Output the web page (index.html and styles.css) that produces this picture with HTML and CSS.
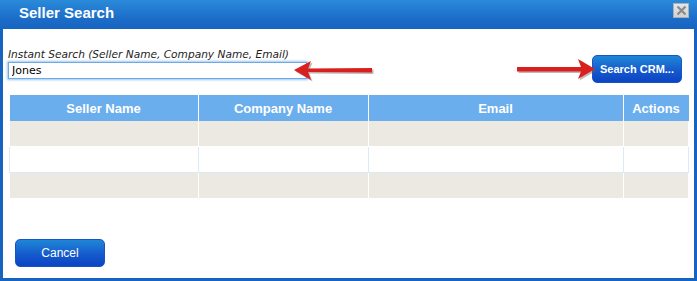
FILE: index.html
```html
<!DOCTYPE html>
<html lang="en">
<head>
    <meta charset="UTF-8">
    <meta name="viewport" content="width=device-width, initial-scale=1.0">
    <title>Seller Search</title>
    <link rel="stylesheet" href="styles.css">
</head>
<body>
    <div class="dialog">
        <div class="titlebar">
            <span class="title">Seller Search</span>
            <button class="close" title="Close">
                <svg width="11" height="11" viewBox="0 0 11 11">
                    <path d="M1.5 1.5 L9.5 9.5 M9.5 1.5 L1.5 9.5" stroke="#8a8a8a" stroke-width="2.2"/>
                </svg>
            </button>
        </div>
        <div class="content">
            <div class="search-row">
                <div class="search-field">
                    <label for="instantSearch">Instant Search (Seller Name, Company Name, Email)</label>
                    <input type="text" id="instantSearch" value="Jones">
                </div>
                <button class="btn btn-search">Search CRM...</button>
            </div>

            <table class="results">
                <thead>
                    <tr>
                        <th class="col-seller">Seller Name</th>
                        <th class="col-company">Company Name</th>
                        <th class="col-email">Email</th>
                        <th class="col-actions">Actions</th>
                    </tr>
                </thead>
                <tbody>
                    <tr><td></td><td></td><td></td><td></td></tr>
                    <tr><td></td><td></td><td></td><td></td></tr>
                    <tr><td></td><td></td><td></td><td></td></tr>
                </tbody>
            </table>

            <button class="btn btn-cancel">Cancel</button>
        </div>

        <!-- annotation arrows -->
        <svg class="arrow arrow-left" width="86" height="26" viewBox="0 0 86 26">
            <g transform="translate(1.5,1.5)" fill="#7a5a5a" opacity="0.45">
                <path d="M2 11 L19 2 L16 9.5 L80 9 L80 13.5 L16 13 L19 21 Z"/>
            </g>
            <path d="M2 11 L19 2 L16 9.5 L80 9 L80 13.5 L16 13 L19 21 Z" fill="#d9201f"/>
        </svg>
        <svg class="arrow arrow-right" width="86" height="26" viewBox="0 0 86 26">
            <g transform="translate(1.5,1.5)" fill="#7a5a5a" opacity="0.45">
                <path d="M80 11 L63 1 L66 9 L2 9 L2 13.5 L66 13.5 L63 21 Z"/>
            </g>
            <path d="M80 11 L63 1 L66 9 L2 9 L2 13.5 L66 13.5 L63 21 Z" fill="#d9201f"/>
        </svg>
    </div>
</body>
</html>
```

FILE: styles.css
```css
body {
    margin: 0;
    padding: 0;
    background-color: #fff;
    font-family: "Liberation Sans", Arial, sans-serif;
}

.dialog {
    position: relative;
    width: 697px;
    height: 281px;
    box-sizing: border-box;
    border: 3px solid #1763c0;
    border-top: none;
    display: flex;
    flex-direction: column;
    background-color: #fff;
}

.titlebar {
    height: 29px;
    margin: 0 -3px;
    padding: 0 8px 0 19px;
    display: flex;
    justify-content: space-between;
    align-items: flex-start;
    background: linear-gradient(to bottom, #2a8ad9, #1a6bc7 70%, #1764c1);
}

.title {
    color: #fff;
    font-size: 15px;
    font-weight: bold;
    line-height: 25px;
}

.close {
    margin-top: 3px;
    width: 16px;
    height: 15px;
    padding: 0;
    border: 1px solid #a8b0b8;
    background: linear-gradient(to bottom, #e6e6e6, #d2d2d2);
    display: flex;
    align-items: center;
    justify-content: center;
    cursor: pointer;
}

.content {
    flex: 1;
    padding: 18px 5px 0 5px;
}

.search-row {
    display: flex;
    justify-content: space-between;
    align-items: flex-start;
}

.search-field label {
    display: block;
    font-family: "DejaVu Sans", Verdana, sans-serif;
    font-style: italic;
    font-size: 10.6px;
    line-height: 15px;
    color: #222;
}

.search-field input {
    display: block;
    width: 299px;
    height: 17px;
    box-sizing: border-box;
    margin: 0;
    padding: 0 3px;
    border: 1px solid #6fa8e6;
    box-shadow: 0 0 2px 1px #9cc6f0;
    font-family: "DejaVu Sans", Verdana, sans-serif;
    font-size: 11px;
    color: #000;
    outline: none;
}

.btn {
    display: block;
    width: 90px;
    height: 28px;
    border: 1px solid #1556c6;
    border-radius: 5px;
    background: linear-gradient(to bottom, #1f86d6, #1457cc 60%, #0c44c3);
    color: #fff;
    font-family: "Liberation Sans", Arial, sans-serif;
    cursor: pointer;
}

.btn-search {
    margin: 8px 7px 0 0;
    font-size: 11px;
    font-weight: bold;
}

.btn-cancel {
    margin: 40px 0 0 7px;
    font-size: 12px;
}

.results {
    margin: 12px 0 0 1px;
    border-collapse: collapse;
    table-layout: fixed;
}

.results th {
    height: 26px;
    padding: 0;
    background-color: #6aaeed;
    color: #fff;
    font-size: 13px;
    font-weight: bold;
    text-align: center;
    border-right: 1px solid #fff;
}

.results th:last-child {
    border-right: none;
}

.col-seller { width: 188px; }
.col-company { width: 169px; }
.col-email { width: 254px; }
.col-actions { width: 65px; }

.results td {
    height: 25px;
    padding: 0;
    background-color: #ece9e2;
    border: 1px solid #fff;
    border-top: none;
}

.results tbody tr:nth-child(2) td {
    background-color: #fff;
    border-color: #dbeaf7;
}

.arrow {
    position: absolute;
}

.arrow-left {
    left: 289px;
    top: 59px;
}

.arrow-right {
    left: 512px;
    top: 58px;
}
```
